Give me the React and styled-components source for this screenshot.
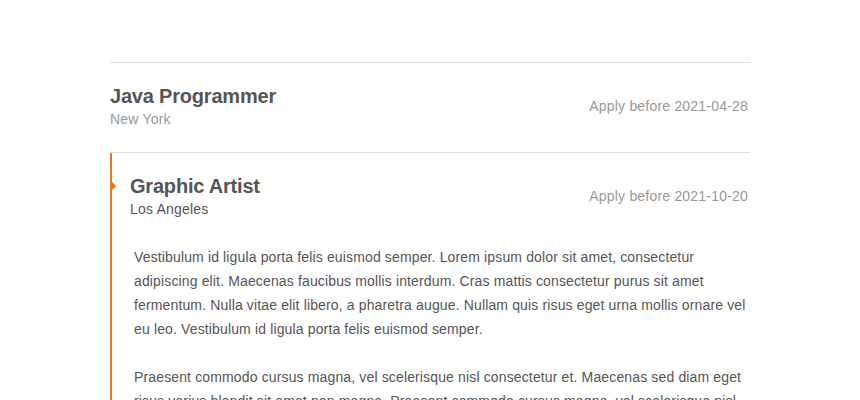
import React from 'react';
import styled, { createGlobalStyle } from 'styled-components';

const GlobalStyle = createGlobalStyle`
  body {
    margin: 0;
    background: #fff;
    font-family: "Liberation Sans", Arial, sans-serif;
  }
`;

const List = styled.div`
  width: 640px;
  margin: 62px auto 0;
  border-top: 1px solid #dedede;
`;

const Item = styled.div`
  position: relative;
  padding: 21px 0 23px ${props => (props.active ? '18px' : '0')};
  border-bottom: 1px solid #dedede;
  border-left: ${props => (props.active ? '2px solid #e8781e' : 'none')};
`;

// little arrow hanging off the active border
const Marker = styled.span`
  position: absolute;
  left: 0;
  top: 29px;
  width: 0;
  height: 0;
  border-top: 4px solid transparent;
  border-bottom: 4px solid transparent;
  border-left: 4px solid #e8781e;
`;

const Header = styled.div`
  display: flex;
  align-items: center;
  justify-content: space-between;
`;

const Title = styled.div`
  font-size: 20px;
  line-height: 24px;
  font-weight: bold;
  color: #555;
  letter-spacing: -0.2px;
`;

const Location = styled.div`
  padding-top: 1px;
  font-size: 14px;
  line-height: 20px;
  letter-spacing: 0.2px;
  color: ${props => (props.active ? '#555' : '#999')};
`;

const Deadline = styled.div`
  font-size: 14px;
  color: #999;
  letter-spacing: 0.2px;
  padding: 0 2px 2px 0;
`;

const Body = styled.div`
  padding: 0 4px 0 4px;
  margin-top: 26px;
  font-size: 14px;
  line-height: 24px;
  color: #555;
  letter-spacing: 0.14px;

  p {
    margin: 0 0 24px;
  }
`;

const jobs = [
  { title: 'Java Programmer', location: 'New York', deadline: '2021-04-28' },
  {
    title: 'Graphic Artist',
    location: 'Los Angeles',
    deadline: '2021-10-20',
    active: true,
    text: [
      'Vestibulum id ligula porta felis euismod semper. Lorem ipsum dolor sit amet, consectetur adipiscing elit. Maecenas faucibus mollis interdum. Cras mattis consectetur purus sit amet fermentum. Nulla vitae elit libero, a pharetra augue. Nullam quis risus eget urna mollis ornare vel eu leo. Vestibulum id ligula porta felis euismod semper.',
      'Praesent commodo cursus magna, vel scelerisque nisl consectetur et. Maecenas sed diam eget risus varius blandit sit amet non magna. Praesent commodo cursus magna, vel scelerisque nisl consectetur et.',
    ],
  },
];

export default function App() {
  return (
    <>
      <GlobalStyle />
      <List>
        {jobs.map(job => (
          <Item key={job.title} active={job.active}>
            {job.active && <Marker />}
            <Header>
              <div>
                <Title>{job.title}</Title>
                <Location active={job.active}>{job.location}</Location>
              </div>
              <Deadline>Apply before {job.deadline}</Deadline>
            </Header>
            {job.text && (
              <Body>
                {job.text.map((t, i) => (
                  <p key={i}>{t}</p>
                ))}
              </Body>
            )}
          </Item>
        ))}
      </List>
    </>
  );
}
